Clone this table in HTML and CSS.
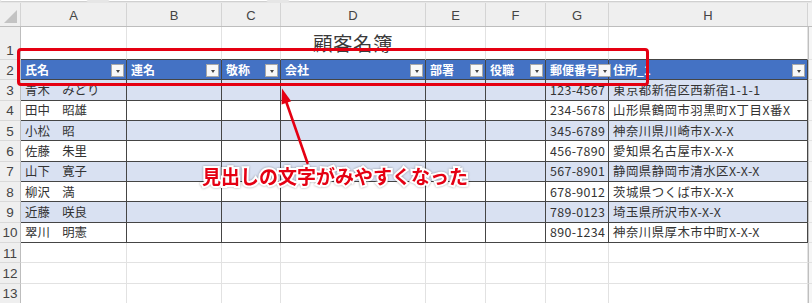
FILE: index.html
```html
<!DOCTYPE html>
<html lang="ja">
<head>
<meta charset="utf-8">
<title>顧客名簿</title>
<link rel="stylesheet" href="styles.css">
</head>
<body>
<div class="sheet">
  <div class="topstrip"><span class="tb tb1"></span><span class="tb tb2"></span><span class="tb tb3"></span></div>
  <div class="row colhead">
    <div class="corner"><span class="tri"></span></div>
    <div class="ch">A</div><div class="ch">B</div><div class="ch">C</div><div class="ch">D</div>
    <div class="ch">E</div><div class="ch">F</div><div class="ch">G</div><div class="ch">H</div><div class="ch tail"></div>
  </div>
  <div class="row r1">
    <div class="rh">1</div>
    <div class="c"></div><div class="c"></div><div class="c"></div>
    <div class="c title">顧客名簿</div>
    <div class="c"></div><div class="c"></div><div class="c"></div><div class="c"></div><div class="c tail"></div>
  </div>
  <div class="row thead">
    <div class="rh">2</div>
    <div class="c th"><span>氏名</span><i class="fb"></i></div>
    <div class="c th"><span>連名</span><i class="fb"></i></div>
    <div class="c th"><span>敬称</span><i class="fb"></i></div>
    <div class="c th"><span>会社</span><i class="fb"></i></div>
    <div class="c th"><span>部署</span><i class="fb"></i></div>
    <div class="c th"><span>役職</span><i class="fb"></i></div>
    <div class="c th"><span>郵便番号</span><i class="fb"></i></div>
    <div class="c th"><span>住所_1</span><i class="fb"></i></div>
    <div class="c tail"></div>
  </div>
  <div class="row tr odd">
    <div class="rh">3</div>
    <div class="c td">青木　みどり</div><div class="c td"></div><div class="c td"></div><div class="c td"></div><div class="c td"></div><div class="c td"></div>
    <div class="c td num">123-4567</div><div class="c td addr">東京都新宿区西新宿1-1-1</div><div class="c tail"></div>
  </div>
  <div class="row tr">
    <div class="rh">4</div>
    <div class="c td">田中　昭雄</div><div class="c td"></div><div class="c td"></div><div class="c td"></div><div class="c td"></div><div class="c td"></div>
    <div class="c td num">234-5678</div><div class="c td addr">山形県鶴岡市羽黒町X丁目X番X</div><div class="c tail"></div>
  </div>
  <div class="row tr odd">
    <div class="rh">5</div>
    <div class="c td">小松　昭</div><div class="c td"></div><div class="c td"></div><div class="c td"></div><div class="c td"></div><div class="c td"></div>
    <div class="c td num">345-6789</div><div class="c td addr">神奈川県川崎市X-X-X</div><div class="c tail"></div>
  </div>
  <div class="row tr">
    <div class="rh">6</div>
    <div class="c td">佐藤　朱里</div><div class="c td"></div><div class="c td"></div><div class="c td"></div><div class="c td"></div><div class="c td"></div>
    <div class="c td num">456-7890</div><div class="c td addr">愛知県名古屋市X-X-X</div><div class="c tail"></div>
  </div>
  <div class="row tr odd">
    <div class="rh">7</div>
    <div class="c td">山下　寛子</div><div class="c td"></div><div class="c td"></div><div class="c td"></div><div class="c td"></div><div class="c td"></div>
    <div class="c td num">567-8901</div><div class="c td addr">静岡県静岡市清水区X-X-X</div><div class="c tail"></div>
  </div>
  <div class="row tr">
    <div class="rh">8</div>
    <div class="c td">柳沢　満</div><div class="c td"></div><div class="c td"></div><div class="c td"></div><div class="c td"></div><div class="c td"></div>
    <div class="c td num">678-9012</div><div class="c td addr">茨城県つくば市X-X-X</div><div class="c tail"></div>
  </div>
  <div class="row tr odd">
    <div class="rh">9</div>
    <div class="c td">近藤　咲良</div><div class="c td"></div><div class="c td"></div><div class="c td"></div><div class="c td"></div><div class="c td"></div>
    <div class="c td num">789-0123</div><div class="c td addr">埼玉県所沢市X-X-X</div><div class="c tail"></div>
  </div>
  <div class="row tr">
    <div class="rh">10</div>
    <div class="c td">翠川　明憲</div><div class="c td"></div><div class="c td"></div><div class="c td"></div><div class="c td"></div><div class="c td"></div>
    <div class="c td num">890-1234</div><div class="c td addr">神奈川県厚木市中町X-X-X</div><div class="c tail"></div>
  </div>
  <div class="row">
    <div class="rh">11</div>
    <div class="c"></div><div class="c"></div><div class="c"></div><div class="c"></div><div class="c"></div><div class="c"></div><div class="c"></div><div class="c"></div><div class="c tail"></div>
  </div>
  <div class="row">
    <div class="rh">12</div>
    <div class="c"></div><div class="c"></div><div class="c"></div><div class="c"></div><div class="c"></div><div class="c"></div><div class="c"></div><div class="c"></div><div class="c tail"></div>
  </div>
  <div class="row">
    <div class="rh">13</div>
    <div class="c"></div><div class="c"></div><div class="c"></div><div class="c"></div><div class="c"></div><div class="c"></div><div class="c"></div><div class="c"></div><div class="c tail"></div>
  </div>
</div>

<div class="callout-box"></div>
<svg class="arrow" width="812" height="303" viewBox="0 0 812 303">
  <path d="M285.6 100 L307.5 163" stroke="#e50012" stroke-width="2.6" stroke-linecap="round" fill="none"/>
  <polygon points="282,88.5 291.2,101.2 281.6,104.4" fill="#e50012"/>
</svg>
<div class="callout-text">見出しの文字がみやすくなった</div>
</body>
</html>
```
FILE: styles.css
```css
:root {
  --cols: 21px 106px 95px 59px 145px 60px 60px 63px 199px 1fr;
  --grid: #e2e2e2;
  --dark: #454545;
  --red: #e50012;
}
* { box-sizing: border-box; }
html, body {
  margin: 0;
  padding: 0;
}
body {
  width: 812px;
  height: 303px;
  overflow: hidden;
  position: relative;
  background: #fff;
  font-family: "Noto Sans CJK JP", "Noto Sans", sans-serif;
  color: #333;
}
.sheet {
  display: flex;
  flex-direction: column;
}
.topstrip {
  height: 3px;
  background: #e6e6e6;
  display: flex;
  gap: 20px;
}
.tb {
  display: block;
  height: 2px;
  background: #fff;
  border-bottom: 1px solid #d0d0d0;
  border-radius: 0 0 2px 2px;
}
.tb1 { width: 88px; }
.tb2 { width: 160px; }
.tb3 { flex: 1; }

.row {
  display: grid;
  grid-template-columns: var(--cols);
  height: 20.33px;
}
.colhead {
  height: 24px;
  background: #efefef;
  border-bottom: 1px solid #bdbdbd;
}
.corner {
  position: relative;
  border-right: 1px solid #d4d4d4;
}
.tri {
  position: absolute;
  right: 3px;
  bottom: 3px;
  width: 0;
  height: 0;
  border-left: 13px solid transparent;
  border-bottom: 13px solid #c3c3c3;
}
.ch {
  display: flex;
  align-items: center;
  justify-content: center;
  font-family: "Liberation Sans", sans-serif;
  font-size: 13px;
  color: #444;
  border-right: 1px solid #d4d4d4;
  padding-top: 1px;
}
.ch.tail { border-right: none; background: #f2f2f2; }

.rh {
  background: #efefef;
  border-right: 1px solid #bdbdbd;
  border-bottom: 1px solid #d9d9d9;
  font-family: "Liberation Sans", sans-serif;
  font-size: 13.5px;
  color: #444;
  display: flex;
  align-items: center;
  justify-content: center;
  padding-top: 1px;
}
.c {
  border-right: 1px solid var(--grid);
  border-bottom: 1px solid var(--grid);
  display: flex;
  align-items: center;
  padding: 0 3px;
  font-size: 12.4px;
  white-space: nowrap;
  overflow: visible;
  min-width: 0;
}
.c.tail {
  background: #f6f6f6;
  border-left: 1px solid #bfbfbf;
  border-right: none;
}

.r1 { height: 33px; }
.r1 .rh { align-items: flex-end; padding-bottom: 1px; }
.r1 .c:not(.tail) { border-bottom: 1px solid var(--dark); }
.title {
  justify-content: center;
  align-items: flex-end;
  font-size: 19.5px;
  color: #3a3a3a;
  padding-bottom: 2px;
  letter-spacing: 0.5px;
}

.thead .th {
  background: #4472c4;
  color: #fff;
  font-weight: 700;
  font-size: 12px;
  border-right: 1px solid var(--dark);
  border-bottom: 1px solid var(--dark);
  padding: 0 2px 0 4px;
}
.th span { flex: 1; }
.fb {
  width: 13px;
  height: 13px;
  background: #f8f8f8;
  border: 1px solid #a8a8a8;
  position: relative;
  flex: none;
  margin-top: 2px;
}
.fb::after {
  content: "";
  position: absolute;
  left: 3.5px;
  top: 5px;
  border-left: 2.5px solid transparent;
  border-right: 2.5px solid transparent;
  border-top: 3px solid #444;
}

.tr .td {
  border-right: 1px solid var(--dark);
  border-bottom: 1px solid var(--dark);
  color: #333;
  padding-left: 4px;
}
.tr .td.num { letter-spacing: 0.35px; }
.tr .td.addr { letter-spacing: 0.5px; }
.tr.odd .td { background: #d9e1f2; }

.callout-box {
  position: absolute;
  left: 17px;
  top: 48px;
  width: 632px;
  height: 38px;
  border: 3px solid var(--red);
  border-radius: 4px;
}
.arrow {
  position: absolute;
  left: 0;
  top: 0;
  pointer-events: none;
}
.callout-text {
  position: absolute;
  left: 202px;
  top: 163px;
  font-size: 19px;
  line-height: 26px;
  font-weight: 700;
  color: var(--red);
  -webkit-text-stroke: 4px #fff;
  paint-order: stroke fill;
  filter: drop-shadow(0 0 1px rgba(0, 0, 0, 0.35));
  white-space: nowrap;
}
```
